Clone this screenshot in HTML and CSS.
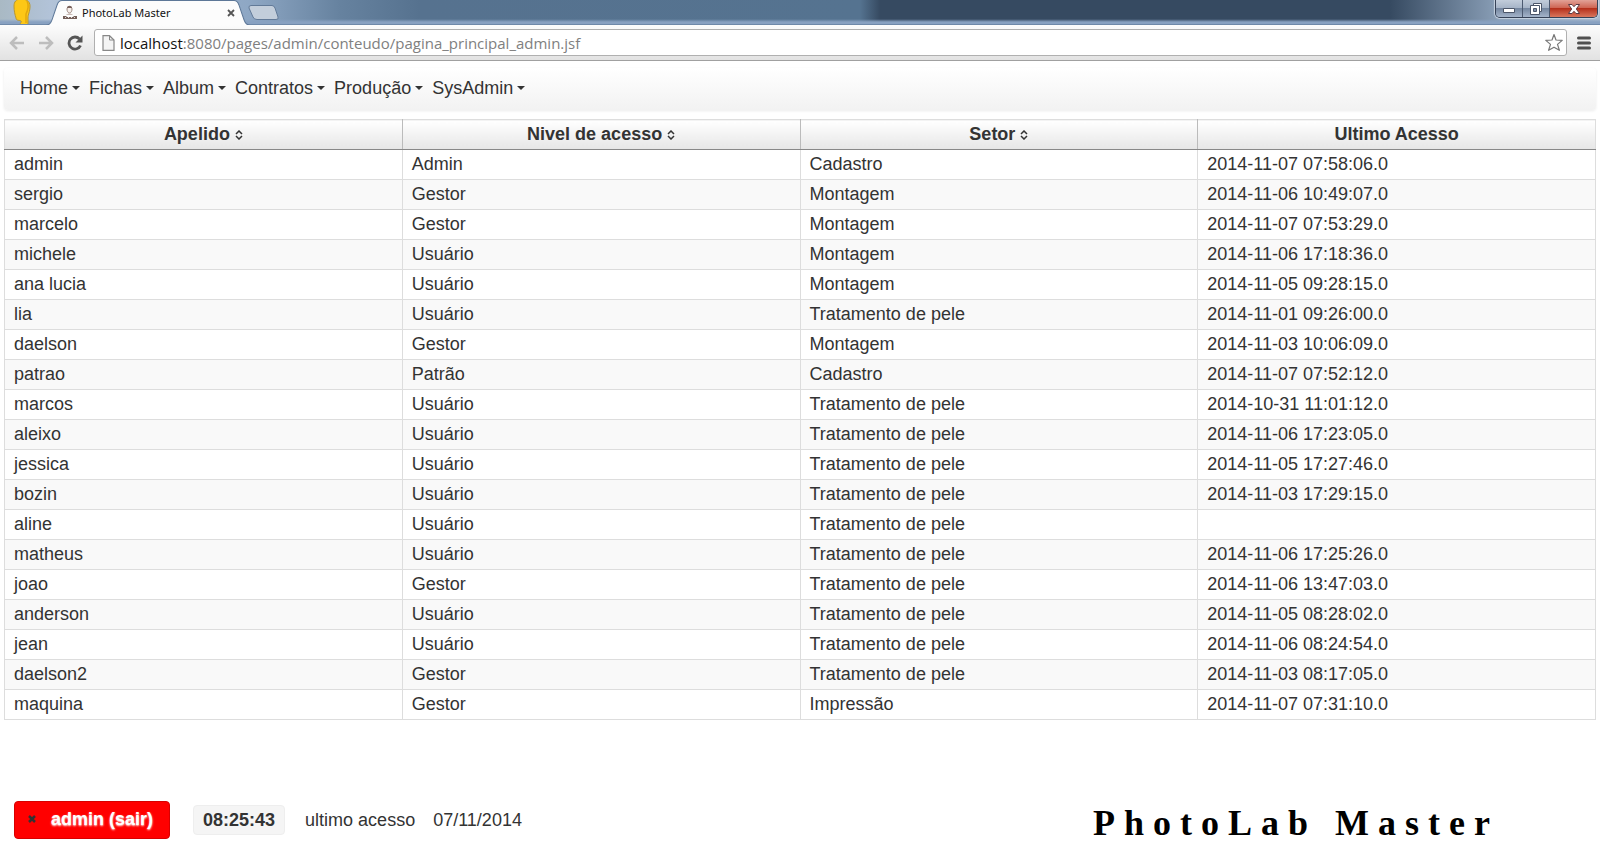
FILE: index.html
```html
<!DOCTYPE html>
<html lang="pt-BR">
<head>
<meta charset="utf-8">
<title>PhotoLab Master</title>
<link rel="stylesheet" href="styles.css">
</head>
<body>
<header class="browser">
  <div class="titlebar">
    <svg class="avatar" width="20" height="24" viewBox="0 0 20 24" aria-hidden="true"><path d="M2 6C2 2 4-1 9-1s9 2 9 7c0 6-2 8-2 12v7H8c0-2 2-3 1-4s-5 0-5-3C3 15 2 11 2 6z" fill="#fdc716" stroke="#b9972f"/><path d="M15 1c2 4 1 9-1 13v9" fill="none" stroke="#e3a80c" stroke-width="1.500"/></svg>
    <div class="tab">
      <svg class="tab-shape" viewBox="0 0 204 24" preserveAspectRatio="none" aria-hidden="true"><path d="M0 24.500C4 24 5 22 6 19L11 5C12 2 13 .5 16 .5H188C191 .5 192 2 193 5L198 19C199 22 200 24 204 24.500Z" fill="#fcfcfc" stroke="#5d7797"/></svg>
      <svg class="favicon" width="16" height="16" viewBox="0 0 16 16" aria-hidden="true"><path d="M5 4c0-3 5-3 5 0 0 2-1 4-2.500 4S5 6 5 4z" fill="#f6eeea" stroke="#9c8780"/><path d="M5 3c0-3 5-3 5 0z" fill="#78615b"/><path d="M4 10c2-2 5-2 7 0z" fill="#c9bab4"/><path d="M1 11h3l1 1h6l1-1h3v3H1z" fill="#75605a"/><path d="M3 12.500h1m2 0h1m2 0h1m2 0h1" stroke="#e9dfdb"/></svg>
      <span class="tab-title">PhotoLab Master</span>
      <button class="plain" aria-label="Fechar guia"><svg width="10" height="10" viewBox="0 0 10 10"><path d="M2 2l6 6M8 2l-6 6" stroke="#555" stroke-width="1.800"/></svg></button>
    </div>
    <button class="plain new-tab" aria-label="Nova guia"><svg width="32" height="16" viewBox="0 0 32 16"><path d="M3 .5H24Q26 .5 27 3L30 12Q31 14.500 28 14.500H9Q6 14.500 5 12L1 3Q.5 .5 3 .5z" fill="#c3cedb" stroke="#627a98"/></svg></button>
    <div class="window-buttons">
      <button class="win" aria-label="Minimizar"><svg width="14" height="10" viewBox="0 0 14 10"><path d="M1.500 4.500h11v4h-11z" fill="#fff" stroke="#4c5669"/></svg></button>
      <button class="win" aria-label="Restaurar"><svg width="14" height="14" viewBox="0 0 14 14"><path d="M4.500 1.500h8v8h-8z" fill="#fff" stroke="#4c5669"/><path d="M1.500 3.500h9v9h-9z" fill="#fff" stroke="#4c5669"/><path d="M4.500 6.500h3v3h-3z" fill="#8291a9" stroke="#4c5669"/></svg></button>
      <button class="win close" aria-label="Fechar"><svg width="14" height="12" viewBox="0 0 14 12"><path d="M1.500 1.500h3.500l2 2.200 2-2.200h3.500L9.300 6l3.200 4.500H9L7 8.300 5 10.500H1.500L4.700 6z" fill="#fff" stroke="#5b3a42"/></svg></button>
    </div>
  </div>
  <div class="toolbar">
    <button class="plain" aria-label="Voltar"><svg width="16" height="16" viewBox="0 0 16 16"><path d="M8 2L2 8l6 6M2 8h13" fill="none" stroke="#bdbdbd" stroke-width="2.500"/></svg></button>
    <button class="plain" aria-label="Avançar"><svg width="16" height="16" viewBox="0 0 16 16"><path d="M8 2l6 6-6 6M14 8H1" fill="none" stroke="#bdbdbd" stroke-width="2.500"/></svg></button>
    <button class="plain" aria-label="Recarregar"><svg width="16" height="16" viewBox="0 0 16 16"><path d="M12.500 4A6 6 0 1 0 13.500 10.500" fill="none" stroke="#555" stroke-width="2.800"/><path d="M15.500 .5v7h-7z" fill="#555"/></svg></button>
    <div class="omnibox">
      <svg width="13" height="16" viewBox="0 0 13 16" aria-hidden="true"><path d="M1 .7h6.500L12 5v10.300H1z" fill="#f4f4f4" stroke="#888" stroke-width="1.200"/><path d="M7.500 .7V5H12" fill="none" stroke="#888"/></svg>
      <a class="url" href="#"><b>localhost</b>:8080/pages/admin/conteudo/pagina_principal_admin.jsf</a>
      <button class="plain" aria-label="Favoritar"><svg width="18" height="19" viewBox="0 0 18 19"><path d="M9 1.500l2 5.500 6.200.4-4.700 4 1.900 5.900L9 14.200l-5.400 3.100 1.900-5.900-4.700-4L7 7z" fill="#fff" stroke="#777" stroke-width="1.200" stroke-linejoin="round"/></svg></button>
    </div>
    <button class="plain" aria-label="Menu"><svg width="14" height="14" viewBox="0 0 14 14"><path d="M1.500 2h11M1.500 7h11M1.500 12h11" stroke="#505050" stroke-width="3" stroke-linecap="round"/></svg></button>
  </div>
</header>
<main class="page">
  <nav class="menubar">
    <button>Home</button><button>Fichas</button><button>Album</button><button>Contratos</button><button>Produção</button><button>SysAdmin</button>
  </nav>
  <table class="users">
    <thead><tr>
      <th scope="col">Apelido <svg class="sort" viewBox="0 0 8 10"><path d="M1 4l3-3 3 3M1 6l3 3 3-3"/></svg></th>
      <th scope="col">Nivel de acesso <svg class="sort" viewBox="0 0 8 10"><path d="M1 4l3-3 3 3M1 6l3 3 3-3"/></svg></th>
      <th scope="col">Setor <svg class="sort" viewBox="0 0 8 10"><path d="M1 4l3-3 3 3M1 6l3 3 3-3"/></svg></th>
      <th scope="col">Ultimo Acesso</th>
    </tr></thead>
    <tbody>
      <tr><td>admin</td><td>Admin</td><td>Cadastro</td><td>2014-11-07 07:58:06.0</td></tr>
      <tr><td>sergio</td><td>Gestor</td><td>Montagem</td><td>2014-11-06 10:49:07.0</td></tr>
      <tr><td>marcelo</td><td>Gestor</td><td>Montagem</td><td>2014-11-07 07:53:29.0</td></tr>
      <tr><td>michele</td><td>Usuário</td><td>Montagem</td><td>2014-11-06 17:18:36.0</td></tr>
      <tr><td>ana lucia</td><td>Usuário</td><td>Montagem</td><td>2014-11-05 09:28:15.0</td></tr>
      <tr><td>lia</td><td>Usuário</td><td>Tratamento de pele</td><td>2014-11-01 09:26:00.0</td></tr>
      <tr><td>daelson</td><td>Gestor</td><td>Montagem</td><td>2014-11-03 10:06:09.0</td></tr>
      <tr><td>patrao</td><td>Patrão</td><td>Cadastro</td><td>2014-11-07 07:52:12.0</td></tr>
      <tr><td>marcos</td><td>Usuário</td><td>Tratamento de pele</td><td>2014-10-31 11:01:12.0</td></tr>
      <tr><td>aleixo</td><td>Usuário</td><td>Tratamento de pele</td><td>2014-11-06 17:23:05.0</td></tr>
      <tr><td>jessica</td><td>Usuário</td><td>Tratamento de pele</td><td>2014-11-05 17:27:46.0</td></tr>
      <tr><td>bozin</td><td>Usuário</td><td>Tratamento de pele</td><td>2014-11-03 17:29:15.0</td></tr>
      <tr><td>aline</td><td>Usuário</td><td>Tratamento de pele</td><td></td></tr>
      <tr><td>matheus</td><td>Usuário</td><td>Tratamento de pele</td><td>2014-11-06 17:25:26.0</td></tr>
      <tr><td>joao</td><td>Gestor</td><td>Tratamento de pele</td><td>2014-11-06 13:47:03.0</td></tr>
      <tr><td>anderson</td><td>Usuário</td><td>Tratamento de pele</td><td>2014-11-05 08:28:02.0</td></tr>
      <tr><td>jean</td><td>Usuário</td><td>Tratamento de pele</td><td>2014-11-06 08:24:54.0</td></tr>
      <tr><td>daelson2</td><td>Gestor</td><td>Tratamento de pele</td><td>2014-11-03 08:17:05.0</td></tr>
      <tr><td>maquina</td><td>Gestor</td><td>Impressão</td><td>2014-11-07 07:31:10.0</td></tr>
    </tbody>
  </table>
</main>
<footer class="status">
  <button class="logout"><svg width="8" height="8" viewBox="0 0 8 8" aria-hidden="true"><path d="M1 1l6 6M7 1L1 7" stroke="#333" stroke-width="2.500"/></svg>admin (sair)</button>
  <time class="clock">08:25:43</time>
  <span>ultimo acesso</span>
  <time class="date">07/11/2014</time>
  <div class="brand">PhotoLab Master</div>
</footer>
</body>
</html>
```

FILE: styles.css
```css
* { box-sizing: border-box; }

body {
  display: flex;
  flex-direction: column;
  min-height: 100vh;
  margin: 0;
  background: #fff;
  color: #333;
  font: 18px/20px "Liberation Sans", Arial, sans-serif;
}

button { font: inherit; color: inherit; cursor: pointer; }
svg { display: block; flex: none; }

.plain { display: block; padding: 0; border: 0; background: none; }

.titlebar {
  display: flex;
  height: 25px;
  padding: 0 2px 0 12px;
  border-bottom: 1px solid #6f89a9;
  background:
    linear-gradient(to bottom, transparent 19px, #88a1c1 22px),
    linear-gradient(to right, #a9b9c4 0, #b2c3d8 50px, #8ea7c4 250px, #66829f 340px, #56728f 420px, #557390 860px, #364a61 880px, #364a61 1390px, #8ba0b8 1500px, #a9bbcf 1600px);
}

.tab {
  position: relative;
  display: flex;
  align-items: center;
  width: 204px;
  height: 25px;
  margin-left: 14px;
  padding: 1px 14px 0 16px;
  color: #111;
  font: 11px/16px "Noto Sans", sans-serif;
}
.tab > * { position: relative; }
.tab .tab-shape { position: absolute; inset: 0; width: 100%; height: 100%; }
.tab-title { flex: 1; margin-left: 4px; }
.new-tab { align-self: flex-start; margin: 5px 0 0 -2px; }

.window-buttons {
  display: flex;
  height: 18px;
  margin-left: auto;
  border: 1px solid #364257;
  border-top: 0;
  border-radius: 0 0 5px 5px;
  overflow: hidden;
  box-shadow: 0 0 1px 1px #c8d4e2;
}
.win {
  display: flex;
  align-items: center;
  justify-content: center;
  width: 27px;
  padding: 0;
  border: 0;
  border-right: 1px solid #4c5a70;
  background: linear-gradient(#c2cddb, #a7b5c8 45%, #7587a0 50%, #a4b4ca);
}
.win.close {
  width: 47px;
  border-right: 0;
  background: linear-gradient(#e2a297, #cf6654 45%, #b5301b 50%, #d9765c);
}

.toolbar {
  display: flex;
  align-items: center;
  gap: 13px;
  height: 36px;
  padding: 0 9px;
  border-bottom: 1px solid #a0a0a0;
  background: linear-gradient(#fcfcfc, #e2e2e2);
}
.omnibox {
  display: flex;
  flex: 1;
  align-items: center;
  height: 27px;
  margin-left: -2px;
  margin-right: -3px;
  padding: 0 3px 0 7px;
  border: 1px solid #b0b0b0;
  border-radius: 3px;
  background: #fff;
}
.url {
  flex: 1;
  margin-left: 5px;
  color: #808080;
  font: 15px/22px "Open Sans", sans-serif;
  text-decoration: none;
}
.url b { color: #111; font-weight: 400; }

.page { padding: 7px 4px 0; }

.menubar {
  display: flex;
  gap: 9px;
  height: 42px;
  margin-bottom: 9px;
  padding: 0 16px 2px;
  border-radius: 4px;
  background: linear-gradient(#fff, #f2f2f2);
  box-shadow: 0 1px 3px rgba(0, 0, 0, 0.08);
}
.menubar button {
  display: flex;
  align-items: center;
  gap: 4px;
  padding: 0;
  border: 0;
  background: none;
}
.menubar button::after {
  content: "";
  border: 4px solid transparent;
  border-top-color: #333;
  border-bottom: 0;
}

.users {
  width: 100%;
  border-collapse: collapse;
  table-layout: fixed;
}
.users th, .users td { height: 30px; padding: 0 9px 2px; border: 1px solid #ddd; }
.users td { text-align: left; }
.users th {
  border-right-color: #bbb;
  border-bottom-color: #888;
  background: linear-gradient(#fff, #e6e6e6);
  text-align: center;
}
.users th:last-child { border-right-color: #ddd; }
.users tbody tr:nth-child(even) { background: #f9f9f9; }
.sort { display: inline-block; width: 8px; height: 10px; fill: none; stroke: #333; stroke-width: 1.5; }

.status {
  display: flex;
  align-items: center;
  margin-top: auto;
  padding: 0 101px 20px 14px;
}
.logout {
  display: flex;
  align-items: center;
  gap: 15px;
  height: 38px;
  padding: 0 16px 2px 13px;
  border: 1px solid #d80000;
  border-radius: 4px;
  background: #f00;
  color: #fff;
  font-weight: 700;
  text-shadow: 0 1px 2px #fff;
}
.clock {
  margin: 0 20px 0 23px;
  padding: 4px 9px;
  border: 1px solid #eee;
  border-radius: 4px;
  background: #f5f5f5;
  font-weight: 700;
}
.date { margin-left: 18px; }
.brand {
  margin-left: auto;
  padding-top: 6px;
  color: #000;
  font: bold 36px/34px "Liberation Serif", "Times New Roman", serif;
  letter-spacing: 9px;
}
```
